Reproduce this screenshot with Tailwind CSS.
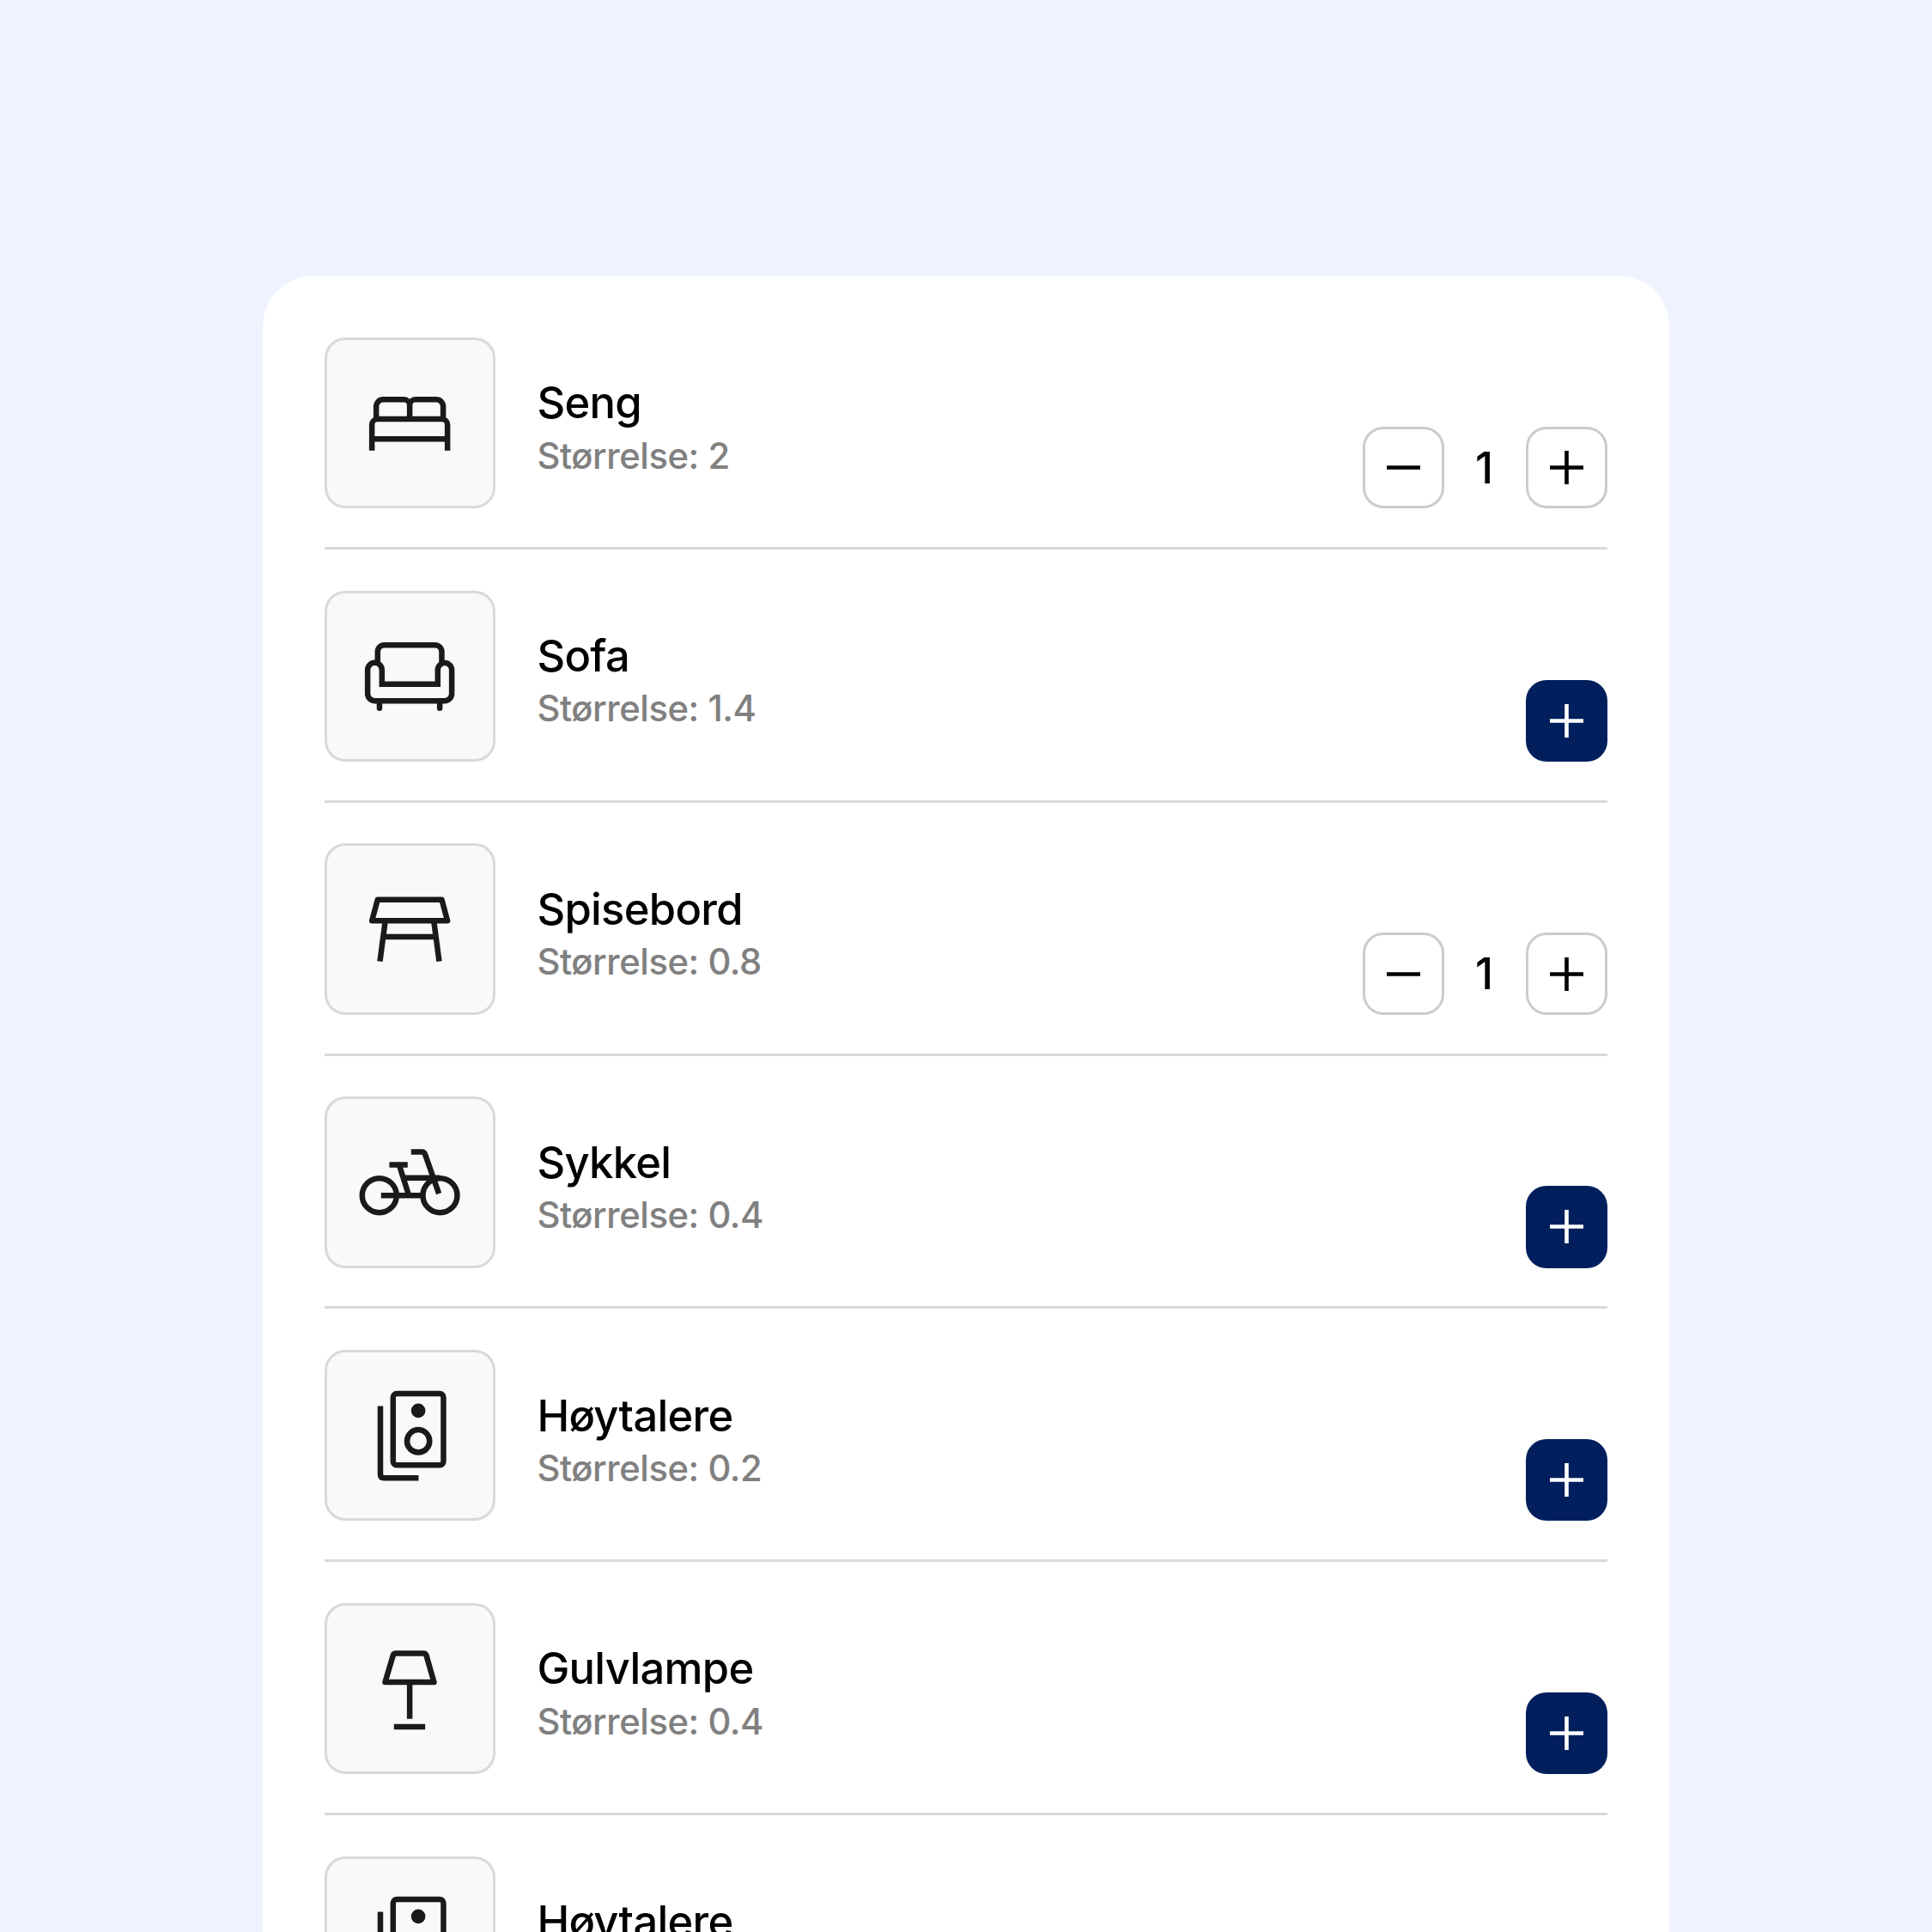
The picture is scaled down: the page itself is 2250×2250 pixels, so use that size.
<!DOCTYPE html>
<html lang="nb">
<head>
<meta charset="utf-8">
<title>Inventar</title>
<script src="https://cdn.jsdelivr.net/npm/@tailwindcss/browser@4"></script>
</head>
<body class="bg-[#eff3ff] font-['Inter',sans-serif]">
<main class="flex h-[2250px] w-[2250px] justify-center overflow-hidden pt-[320.5px]">
  <ul id="list" class="h-[2200px] w-[1638px] shrink-0 rounded-t-[60px] bg-white px-[71.6px] pt-[24.5px]"></ul>
</main>
<script>
const icons = {
  bed: ['381.6 396 360 360', '<path d="M430 674V584a20 20 0 0 1 20-20H674a20 20 0 0 1 20 20v90M430 634H694M445 566V520a24 24 0 0 1 24-24h73a20 20 0 0 1 20 20v48M562 516a20 20 0 0 1 20-20h73a24 24 0 0 1 24 24v46"/>'],
  sofa: ['171.6 170.4 360 360', '<path d="M240 304V266a23 23 0 0 1 23-23H441a23 23 0 0 1 23 23v38M205 413V330a25 25 0 0 1 50 0v50H450V330a24.500 24.500 0 0 1 49 0v83a25 25 0 0 1-25 25H230a25 25 0 0 1-25-25z"/><path stroke-linecap="round" d="M246.500 442v22M457 442v22"/>'],
  table: ['171.6 155.1 360 360', '<path stroke-linejoin="round" d="M240 232H464L484 306H220z"/><path d="M266 312L248 448M437 312L455 448M262 362H442"/>'],
  bike: ['171.6 169.6 360 360', '<circle cx="246" cy="395" r="60"/><circle cx="458" cy="395" r="60"/><path d="M252 395H398M281 288H345M315 288L348 392M335 334H458M357 243H394Q403 243 406 252L454 389"/>'],
  speaker: ['171.6 154.2 360 360', '<rect x="294" y="187" width="176" height="250" rx="13"/><circle cx="382" cy="353" r="39.500"/><circle cx="382" cy="247" r="25" fill="#1a1a1a" stroke="none"/><path d="M249.500 231V469q0 13 13 13H383"/>'],
  lamp: ['171.6 168.7 360 360', '<path stroke-linejoin="round" d="M303 224H401Q408 224 410 231L437 325H266L294 231Q296 224 303 224z"/><path d="M352 325V453M297 481H406"/>']
};
const items = [
  ['bed', 'Seng', '2', 1], ['sofa', 'Sofa', '1.4', 0], ['table', 'Spisebord', '0.8', 1],
  ['bike', 'Sykkel', '0.4', 0], ['speaker', 'Høytalere', '0.2', 0],
  ['lamp', 'Gulvlampe', '0.4', 0], ['speaker', 'Høytalere', '0.2', 0]
];
const sign = d => `<svg class="size-[39px]" viewBox="0 0 39 39" fill="none" stroke="currentColor" stroke-width="4.600"><path d="${d}"/></svg>`;
const plus = sign('M0 19.500H39M19.500 0V39'), minus = sign('M0 19.500H39');
const outline = s => `<button class="flex size-[95.3px] items-center justify-center rounded-[24px] border-3 border-[#cccccc]">${s}</button>`;
const solid = `<button class="flex size-[95.3px] items-center justify-center rounded-[24px] bg-[#001f5c] text-white">${plus}</button>`;
document.getElementById('list').innerHTML = items.map(([icon, name, size, count]) => `
  <li class="flex h-[294.85px] border-b-3 border-[#d9d9d9] pt-[47.7px]">
    <div class="flex size-[199.3px] shrink-0 items-center justify-center rounded-[24px] border-3 border-[#d9d9d9] bg-[#f9f9f9]">
      <svg class="size-[120px]" viewBox="${icons[icon][0]}" fill="none" stroke="#1a1a1a" stroke-width="19.500">${icons[icon][1]}</svg>
    </div>
    <div class="ml-[48.5px] grow pt-[47.5px]">
      <h2 class="text-[50.7px] leading-[58.2px] font-medium tracking-[-0.014em] text-black">${name}</h2>
      <p class="mt-[3.2px] text-[41.8px] leading-[58.2px] font-medium tracking-[-0.011em] text-[#808080]">Størrelse: ${size}</p>
    </div>
    <div class="flex h-[199.3px] items-end text-black">
      ${count ? `${outline(minus)}<span class="w-[95.3px] pr-[2px] text-center text-[50.7px] leading-[95.3px] font-medium">${count}</span>${outline(plus)}` : solid}
    </div>
  </li>`).join('');
</script>
</body>
</html>
